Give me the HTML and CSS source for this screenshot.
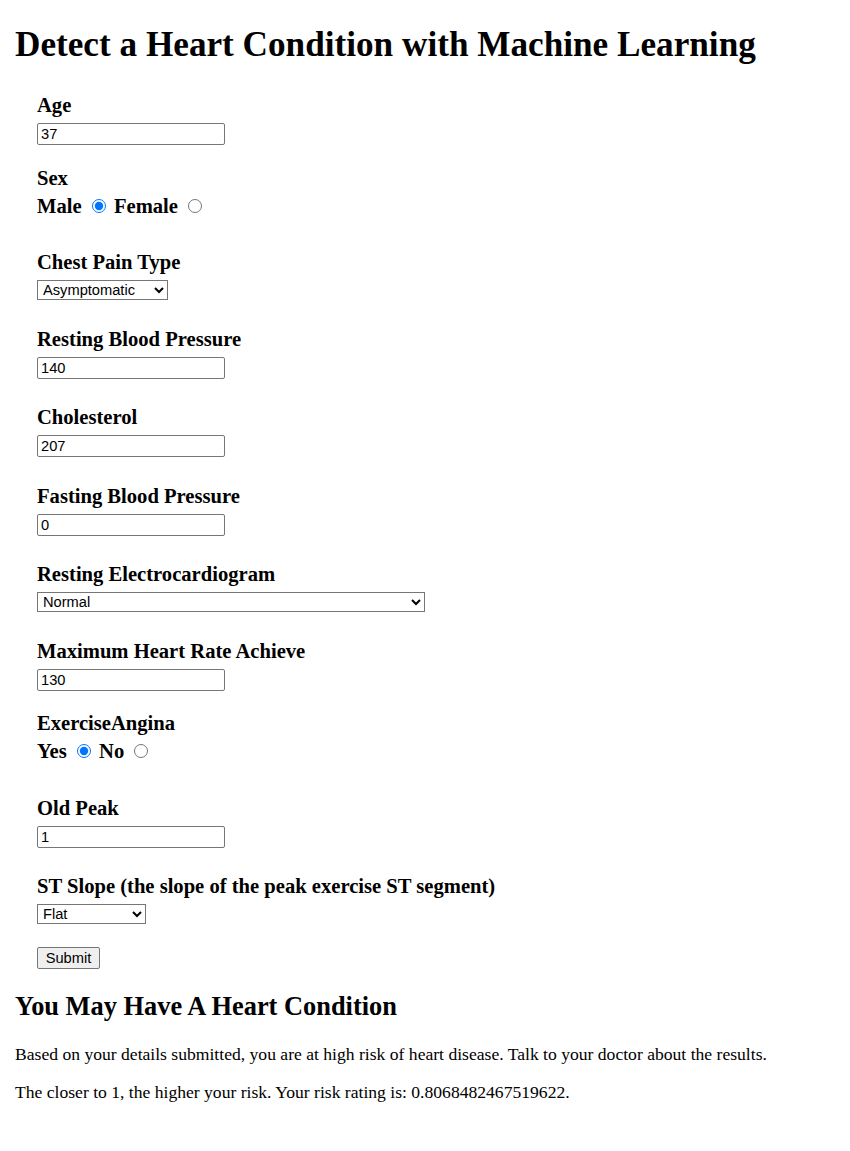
FILE: index.html
```html
<!DOCTYPE html>
<html lang="en">
<head>
<meta charset="utf-8">
<title>Detect a Heart Condition with Machine Learning</title>
<link rel="stylesheet" href="styles.css">
</head>
<body>
<main class="page">
  <h1 class="title">Detect a Heart Condition with Machine Learning</h1>
  <form class="form">
    <div class="field">
      <label class="field-label" for="age">Age</label>
      <input class="text-input" id="age" type="text" value="37">
    </div>
    <div class="field choice">
      <span class="field-label">Sex</span>
      <div class="choice-row"><label for="male">Male</label> <input class="radio" type="radio" id="male" name="sex" checked> <label for="female">Female</label> <input class="radio" type="radio" id="female" name="sex"></div>
    </div>
    <div class="field">
      <label class="field-label" for="cp">Chest Pain Type</label>
      <select class="select select-cp" id="cp">
        <option>Asymptomatic</option>
        <option>Typical Angina</option>
        <option>Atypical Angina</option>
        <option>Non-Anginal Pain</option>
      </select>
    </div>
    <div class="field">
      <label class="field-label" for="rbp">Resting Blood Pressure</label>
      <input class="text-input" id="rbp" type="text" value="140">
    </div>
    <div class="field">
      <label class="field-label" for="chol">Cholesterol</label>
      <input class="text-input" id="chol" type="text" value="207">
    </div>
    <div class="field">
      <label class="field-label" for="fbs">Fasting Blood Pressure</label>
      <input class="text-input" id="fbs" type="text" value="0">
    </div>
    <div class="field">
      <label class="field-label" for="ecg">Resting Electrocardiogram</label>
      <select class="select select-ecg" id="ecg">
        <option>Normal</option>
        <option>ST-T wave abnormality</option>
        <option>Left ventricular hypertrophy</option>
      </select>
    </div>
    <div class="field">
      <label class="field-label" for="mhr">Maximum Heart Rate Achieve</label>
      <input class="text-input" id="mhr" type="text" value="130">
    </div>
    <div class="field choice">
      <span class="field-label">ExerciseAngina</span>
      <div class="choice-row"><label for="yes">Yes</label> <input class="radio" type="radio" id="yes" name="angina" checked> <label for="no">No</label> <input class="radio" type="radio" id="no" name="angina"></div>
    </div>
    <div class="field">
      <label class="field-label" for="oldpeak">Old Peak</label>
      <input class="text-input" id="oldpeak" type="text" value="1">
    </div>
    <div class="field">
      <label class="field-label" for="slope">ST Slope (the slope of the peak exercise ST segment)</label>
      <select class="select select-slope" id="slope">
        <option>Flat</option>
        <option>Up</option>
        <option>Down</option>
      </select>
    </div>
    <div class="actions">
      <button class="submit" type="button">Submit</button>
    </div>
  </form>
  <h2 class="result-title">You May Have A Heart Condition</h2>
  <p class="result-text">Based on your details submitted, you are at high risk of heart disease. Talk to your doctor about the results.</p>
  <p class="result-text">The closer to 1, the higher your risk. Your risk rating is: 0.8068482467519622.</p>
</main>
</body>
</html>
```
FILE: styles.css
```css
html, body {
  margin: 0;
  padding: 0;
  background: #ffffff;
}

body {
  font-family: "Liberation Serif", "Times New Roman", serif;
  font-size: 17.6px;
  color: #000000;
}

.page {
  padding: 0 15px;
}

.title {
  font-size: 35.2px;
  font-weight: bold;
  line-height: normal;
  margin: 25px 0 0;
}

.form {
  margin: 29px 0 0;
  padding-left: 22px;
}

.field-label {
  display: block;
  font-size: 20.6px;
  font-weight: bold;
  line-height: normal;
  margin-bottom: 6px;
}

.field + .field {
  margin-top: 27.5px;
}

.field + .field.choice {
  margin-top: 21.5px;
}

.field.choice {
  padding-bottom: 6px;
}

.choice .field-label {
  margin-bottom: 5px;
}

.choice-row {
  font-size: 20.6px;
  font-weight: bold;
  line-height: normal;
}

.radio {
  width: 14px;
  height: 14px;
  margin: 3px 3px 0 5px;
  vertical-align: baseline;
}

.text-input {
  display: block;
  box-sizing: border-box;
  width: 188px;
  height: 22px;
  margin: 0;
  padding: 1px 3px;
  border: 1px solid #767676;
  border-radius: 2px;
  font-family: "Liberation Sans", Arial, sans-serif;
  font-size: 14.67px;
  color: #000000;
  background: #ffffff;
}

.select {
  display: block;
  box-sizing: border-box;
  height: 20px;
  margin: 0;
  padding: 0 0 0 1px;
  border: 1px solid #767676;
  border-radius: 0;
  font-family: "Liberation Sans", Arial, sans-serif;
  font-size: 14.67px;
  color: #000000;
  background-color: #ffffff;
}

.select-cp {
  width: 131px;
}

.select-ecg {
  width: 388px;
}

.select-slope {
  width: 109px;
}

.actions {
  margin-top: 23px;
}

.submit {
  display: block;
  box-sizing: border-box;
  width: 63px;
  height: 22px;
  margin: 0;
  padding: 0 6px;
  border: 1px solid #767676;
  border-radius: 2px;
  background: #efefef;
  font-family: "Liberation Sans", Arial, sans-serif;
  font-size: 14.67px;
  color: #000000;
}

.result-title {
  font-size: 26.4px;
  font-weight: bold;
  line-height: normal;
  margin: 22px 0 22px;
}

.result-text {
  font-size: 17.6px;
  line-height: normal;
  margin: 17px 0;
}
```
